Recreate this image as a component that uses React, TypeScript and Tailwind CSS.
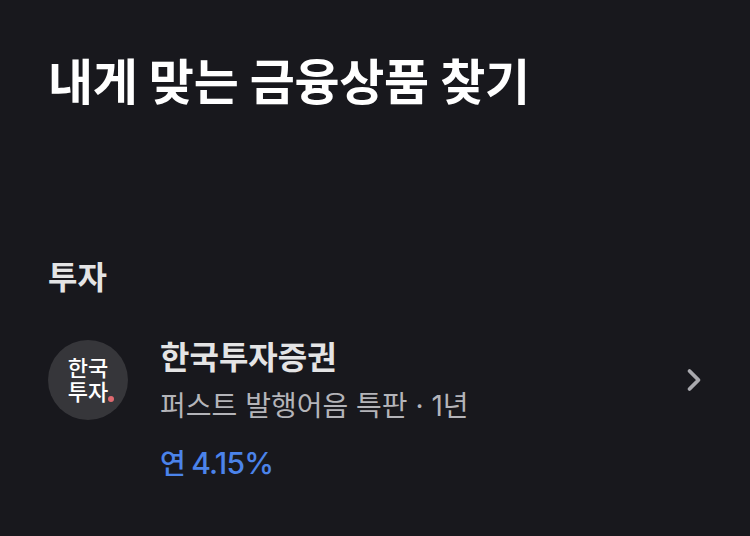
import React from 'react';
import { ChevronRight } from 'lucide-react';

const font = "font-['Inter','Noto_Sans_CJK_KR',sans-serif]";

export default function App() {
  return (
    <div className={`w-[750px] h-[536px] overflow-hidden bg-[#18181d] px-12 ${font}`}>
      {/* Page title */}
      <h1 className="pt-[53px] text-[49px] leading-[60px] font-bold text-white tracking-[-0.3px]">내게 맞는 금융상품 찾기</h1>

      {/* Section */}
      <h2 className="mt-[145px] text-[32px] leading-[40px] font-bold text-[#e4e4e5]">투자</h2>

      <div className="mt-[38px] flex items-start">
        <div className="w-20 h-20 mt-[4px] rounded-full bg-[#36363a] flex items-center justify-center relative shrink-0">
          <div className="text-[22px] leading-[24px] font-medium text-white text-center">
            한국
            <br />
            투자
          </div>
          <span className="absolute left-[60px] top-[56px] w-[6px] h-[6px] rounded-full bg-[#e06a70]"></span>
        </div>

        <div className="ml-8 flex-1">
          <p className="mt-[2px] text-[32px] leading-[40px] font-bold text-[#e4e4e5]">한국투자증권</p>
          <p className="mt-[10px] text-[28px] leading-[36px] text-[#b4b4b9]">퍼스트 발행어음 특판 · 1년</p>
          <p className="mt-[21px] text-[28px] leading-[36px] font-medium text-[#4b83ea]">
            연 <span className="-ml-[2px] text-[30px] tracking-[-0.8px]">4.15%</span>
          </p>
        </div>

        <ChevronRight className="w-9 h-9 mt-[26px] mr-[-10px] text-[#a9a9ae]" strokeWidth={2.5} />
      </div>
    </div>
  );
}
